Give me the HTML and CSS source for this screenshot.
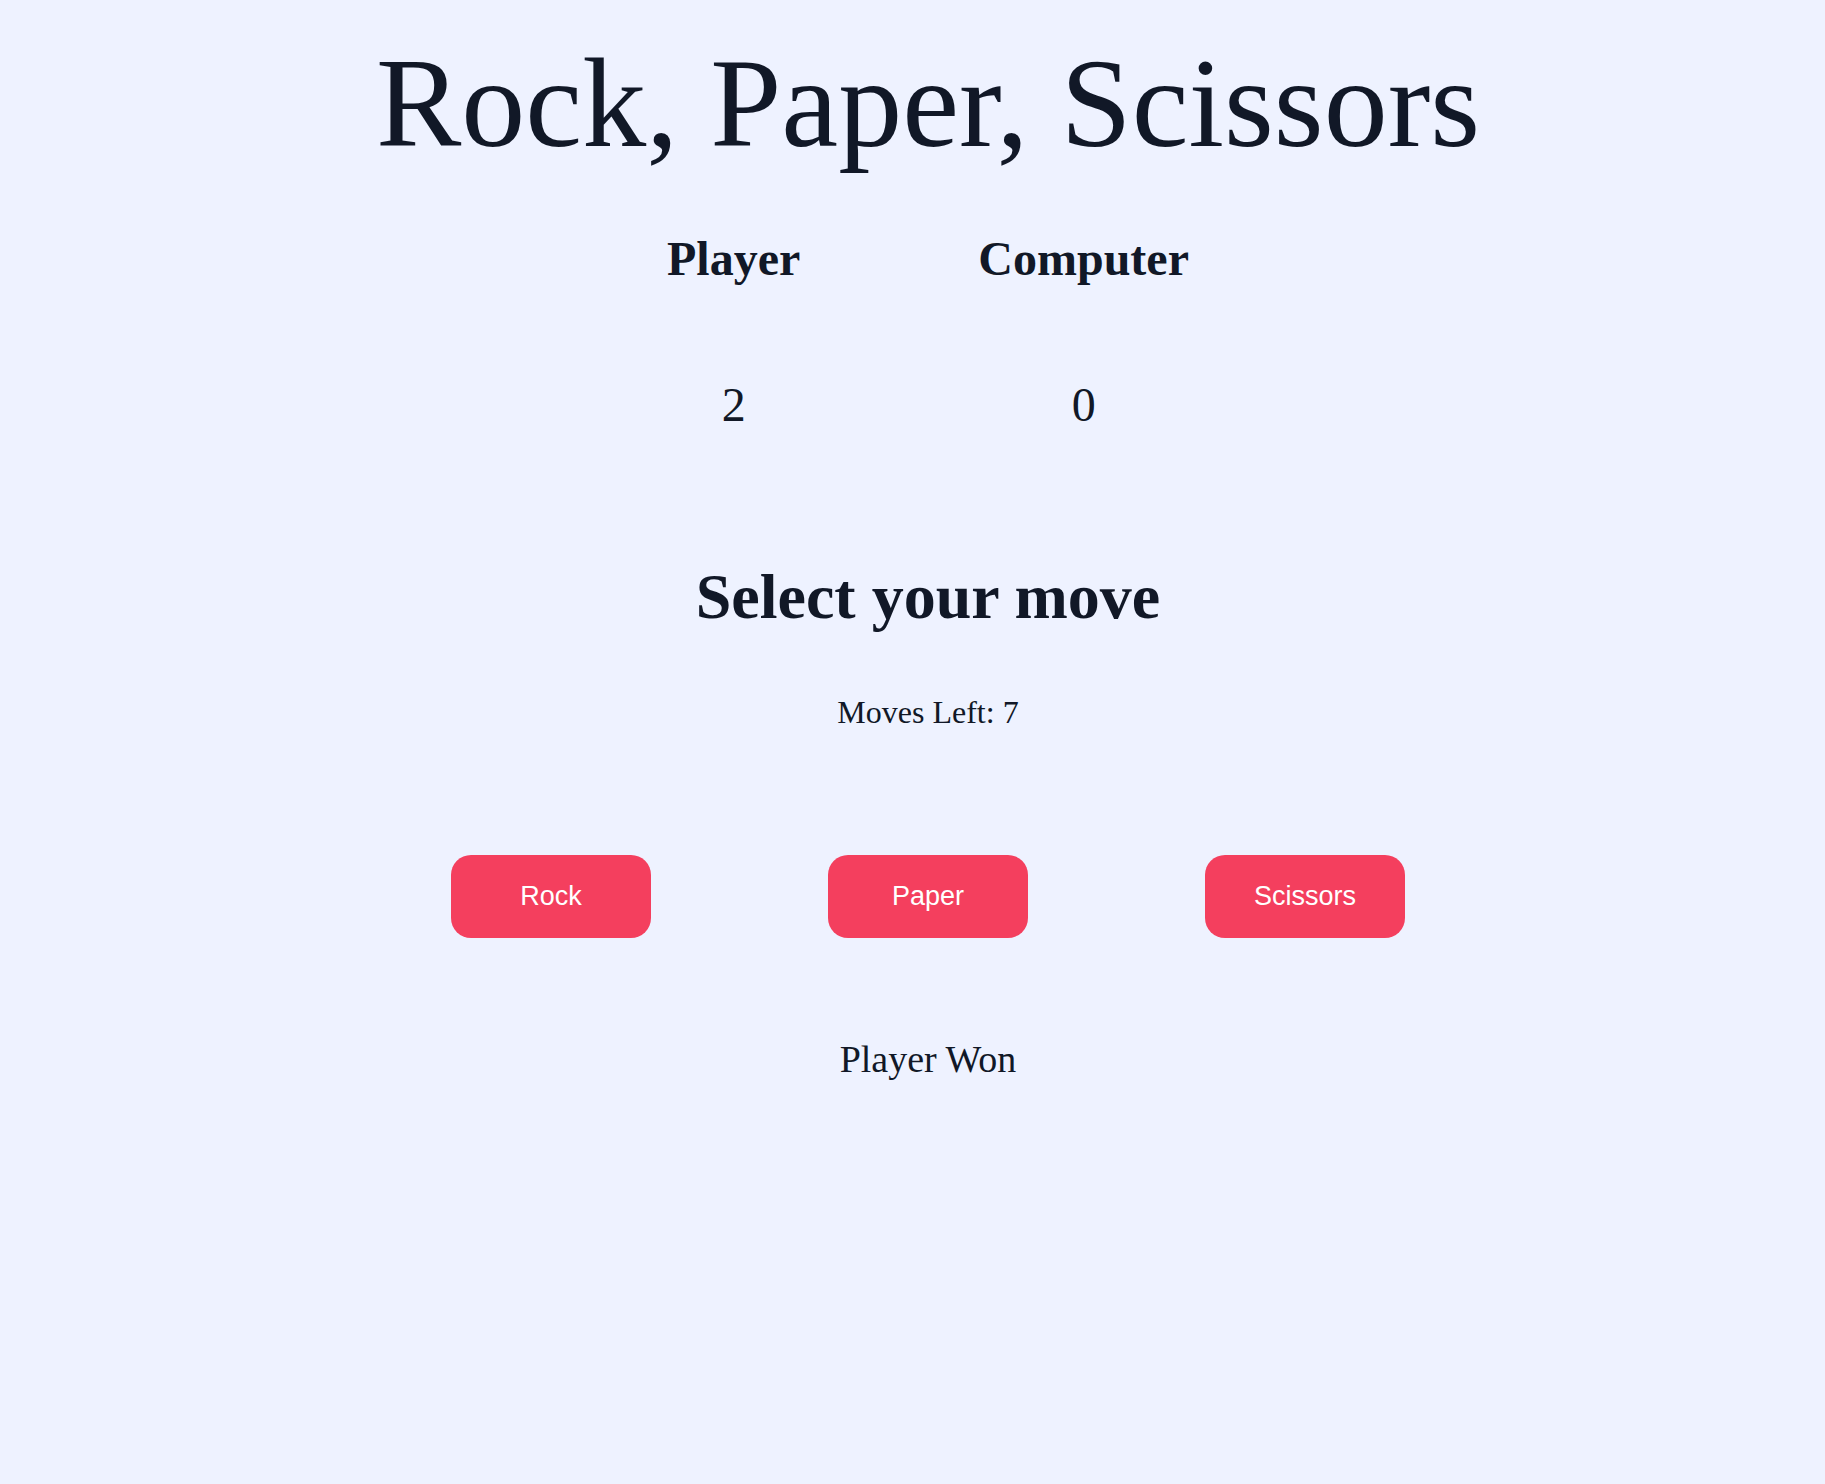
FILE: index.html
```html
<!DOCTYPE html>
<html lang="en">
<head>
<meta charset="utf-8">
<title>Rock, Paper, Scissors</title>
<link rel="stylesheet" href="styles.css">
</head>
<body>
<main class="game">
  <h1 class="title">Rock, Paper, Scissors</h1>
  <section class="scores">
    <div class="score-col">
      <h2 class="score-label">Player</h2>
      <p class="score-value">2</p>
    </div>
    <div class="score-col">
      <h2 class="score-label">Computer</h2>
      <p class="score-value">0</p>
    </div>
  </section>
  <h2 class="prompt">Select your move</h2>
  <p class="moves-left">Moves Left: 7</p>
  <div class="moves">
    <button class="move-btn">Rock</button>
    <button class="move-btn">Paper</button>
    <button class="move-btn">Scissors</button>
  </div>
  <p class="result">Player Won</p>
</main>
</body>
</html>
```
FILE: styles.css
```css
html, body {
  margin: 0;
  padding: 0;
}
body {
  background: #eef2ff;
  color: #111827;
  font-family: "Liberation Serif", "Times New Roman", serif;
  min-height: 1484px;
}
.game {
  margin-left: 31px;
  display: flex;
  flex-direction: column;
  align-items: center;
  padding-top: 39px;
}
.title {
  margin: 0;
  font-size: 128px;
  line-height: 1;
  font-weight: 400;
}
.scores {
  display: flex;
  gap: 178px;
  margin-top: 68px;
}
.score-col {
  display: flex;
  flex-direction: column;
  align-items: center;
}
.score-label {
  margin: 0;
  font-size: 48px;
  line-height: 1;
  font-weight: 700;
}
.score-value {
  margin: 98px 0 0;
  font-size: 48px;
  line-height: 1;
}
.prompt {
  margin: 136px 0 0;
  font-size: 64px;
  line-height: 1;
  font-weight: 700;
}
.moves-left {
  margin: 67px 0 0;
  font-size: 32px;
  line-height: 1;
}
.moves {
  display: flex;
  gap: 177px;
  margin-top: 127px;
}
.move-btn {
  width: 200px;
  height: 83px;
  border: none;
  border-radius: 20px;
  background: #f43f5e;
  color: #ffffff;
  font-family: "Liberation Sans", Arial, sans-serif;
  font-size: 27px;
  cursor: pointer;
}
.result {
  margin: 102px 0 0;
  font-size: 38px;
  line-height: 1;
}
```
